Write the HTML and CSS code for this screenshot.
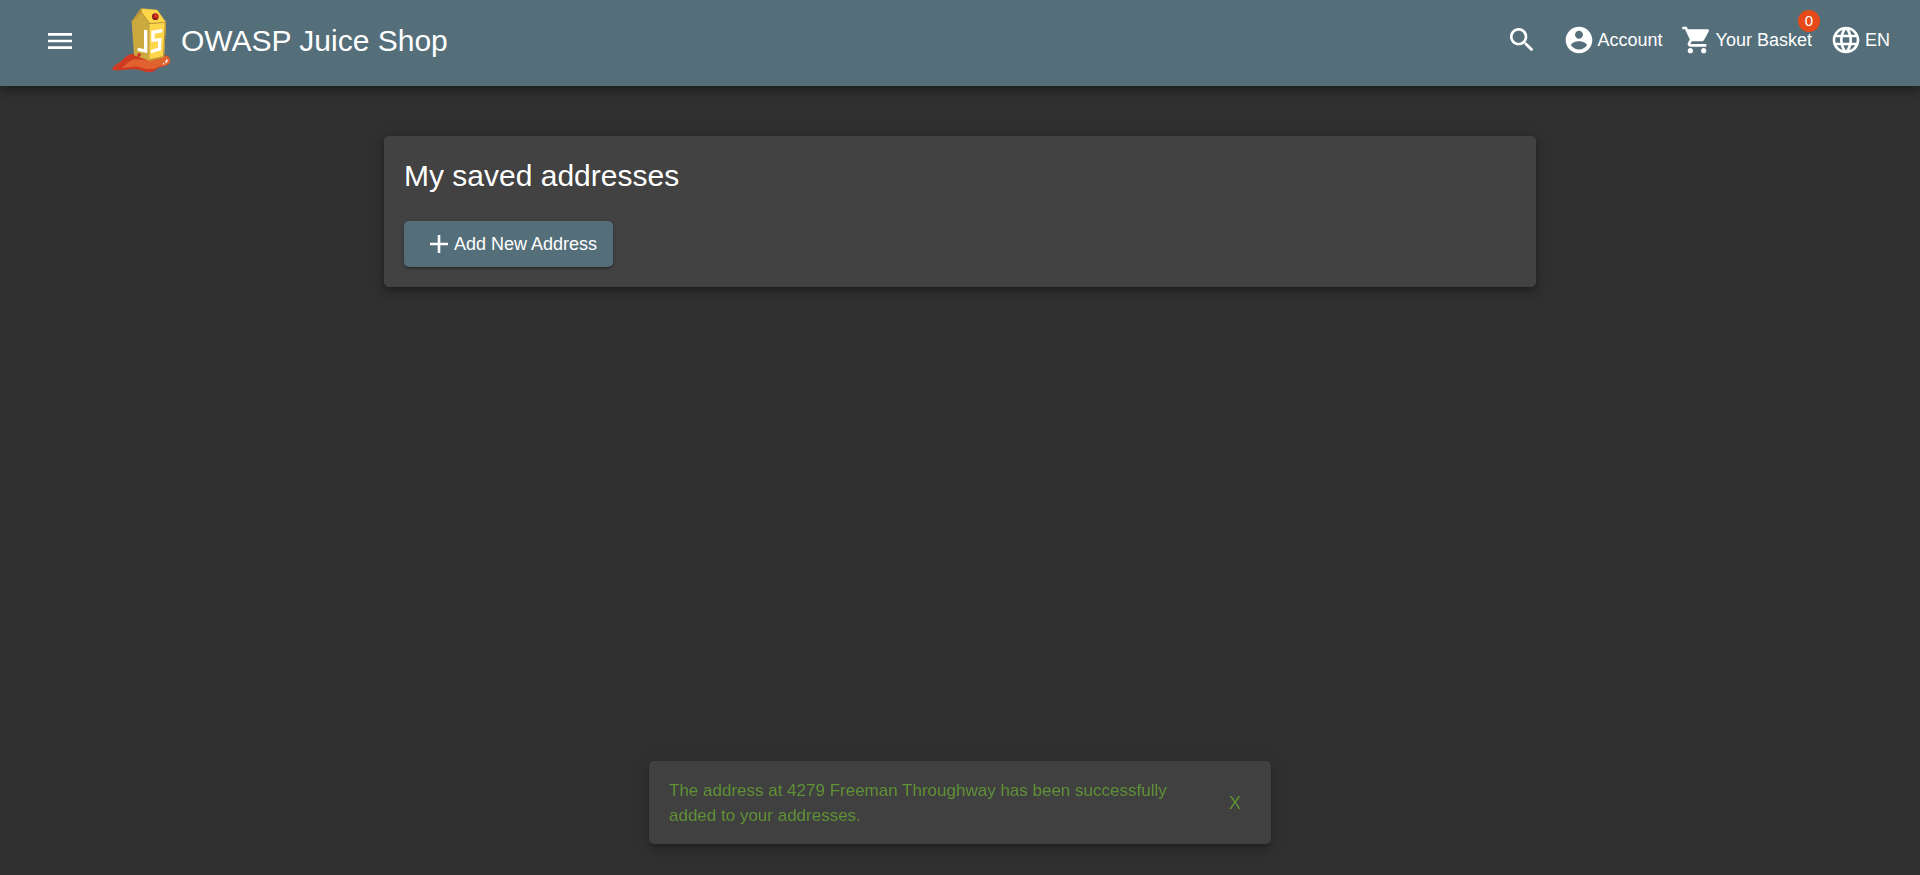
FILE: index.html
```html
<!DOCTYPE html>
<html lang="en">
<head>
<meta charset="utf-8">
<meta name="viewport" content="width=device-width, initial-scale=1">
<title>OWASP Juice Shop</title>
<link rel="stylesheet" href="styles.css">
</head>
<body>
<header class="toolbar">
  <button class="menu-button" type="button" aria-label="Open sidenav">
    <svg class="icon" viewBox="0 0 24 24"><path d="M3 18h18v-2H3v2zm0-5h18v-2H3v2zm0-7v2h18V6H3z"/></svg>
  </button>
  <a class="brand" href="#">
    <svg class="logo" viewBox="21 24 174 198" aria-hidden="true">
      <path fill="#cf3a22" d="M22 207C24 194 44 190 56 176C64 166 76 160 92 161L176 166C192 165 198 178 196 186C193 197 178 200 164 202C154 206 150 217 132 217C116 217 108 208 88 208C66 207 48 212 32 211C24 211 22 209 22 207Z"/>
      <path fill="#e0622f" d="M50 204C62 196 72 180 92 178C116 178 150 186 178 168C192 166 197 178 195 186C190 196 176 198 160 200C150 206 142 210 130 208C112 206 104 198 84 200C72 201 60 203 50 204Z"/>
      <path fill="#cf3a22" d="M122 209L138 206L150 210L132 215Z"/>
      <path fill="#cba93f" d="M108 25L80 64L87 166L133 182L133 71Z"/>
      <path fill="#fdd64a" d="M133 71L183 67L177 172L133 182Z"/>
      <path fill="#e0b843" d="M108 25L157 29L183 66L133 71Z"/>
      <path fill="#fdd64a" d="M110 27L156 31L180 65L135 69L112 40Z"/>
      <path fill="#b99434" d="M108 25L80 64L81 67L109 37L133 72L183 68L183 66L134 70L110 35Z"/>
      <path fill="#b99434" d="M179 70L183 68L177 172L133 182V178L174 169Z"/>
      <circle cx="151" cy="50" r="10" fill="#82201a"/><circle cx="153" cy="48" r="7" fill="#d5301f"/>
      <path fill="#fff" d="M117 89L127 91V159L98 153V143L117 147ZM139 92L172 87V97L149 101V116L170 114L168 151L138 160V150L159 143V124L139 126Z"/>
      <path fill="#cf3a22" d="M96 178L97 163Q102 155 108 162L107 169L102 170V180Z"/>
      <path fill="#fff" d="M182 180L188 178L187 187L181 190ZM174 189L178 188L177 193L174 194Z"/>
    </svg>
    <span class="brand-name">OWASP Juice Shop</span>
  </a>
  <nav class="actions">
    <button class="action search" type="button" aria-label="Search">
      <svg class="icon" viewBox="0 0 24 24"><path d="M15.5 14h-.79l-.28-.27C15.41 12.59 16 11.11 16 9.5 16 5.91 13.09 3 9.5 3S3 5.91 3 9.5 5.91 16 9.5 16c1.61 0 3.09-.59 4.23-1.57l.27.28v.79l5 4.99L20.49 19l-4.99-5zm-6 0C7.01 14 5 11.99 5 9.5S7.01 5 9.5 5 14 7.01 14 9.5 11.99 14 9.5 14z"/></svg>
    </button>
    <button class="action" type="button">
      <svg class="icon" viewBox="0 0 24 24"><path d="M12 2C6.48 2 2 6.48 2 12s4.48 10 10 10 10-4.48 10-10S17.52 2 12 2zm0 3c1.66 0 3 1.34 3 3s-1.34 3-3 3-3-1.34-3-3 1.34-3 3-3zm0 14.2c-2.5 0-4.71-1.28-6-3.22.03-1.99 4-3.08 6-3.08 1.99 0 5.97 1.09 6 3.08-1.29 1.94-3.5 3.22-6 3.22z"/></svg>
      <span>Account</span>
    </button>
    <button class="action" type="button">
      <svg class="icon" viewBox="0 0 24 24"><path d="M7 18c-1.1 0-1.99.9-1.99 2S5.9 22 7 22s2-.9 2-2-.9-2-2-2zM1 2v2h2l3.6 7.59-1.35 2.45c-.16.28-.25.61-.25.96 0 1.1.9 2 2 2h12v-2H7.42c-.14 0-.25-.11-.25-.25l.03-.12.9-1.63h7.45c.75 0 1.41-.41 1.75-1.03l3.58-6.49c.08-.14.12-.31.12-.48 0-.55-.45-1-1-1H5.21l-.94-2H1zm16 16c-1.1 0-1.99.9-1.99 2s.89 2 1.99 2 2-.9 2-2-.9-2-2-2z"/></svg>
      <span class="basket">Your Basket<span class="badge">0</span></span>
    </button>
    <button class="action" type="button">
      <svg class="icon" viewBox="0 0 24 24"><path d="M11.99 2C6.47 2 2 6.48 2 12s4.47 10 9.99 10C17.52 22 22 17.52 22 12S17.52 2 11.99 2zm6.93 6h-2.95c-.32-1.25-.78-2.45-1.38-3.56 1.84.63 3.37 1.91 4.33 3.56zM12 4.04c.83 1.2 1.48 2.53 1.91 3.96h-3.82c.43-1.43 1.08-2.76 1.91-3.96zM4.26 14C4.1 13.36 4 12.69 4 12s.1-1.36.26-2h3.38c-.08.66-.14 1.32-.14 2 0 .68.06 1.34.14 2H4.26zm.82 2h2.95c.32 1.25.78 2.45 1.38 3.56-1.84-.63-3.37-1.9-4.33-3.56zm2.95-8H5.08c.96-1.66 2.49-2.93 4.33-3.56C8.81 5.55 8.35 6.75 8.03 8zM12 19.96c-.83-1.2-1.48-2.53-1.91-3.96h3.82c-.43 1.43-1.08 2.76-1.91 3.96zM14.34 14H9.66c-.09-.66-.16-1.32-.16-2 0-.68.07-1.35.16-2h4.68c.09.65.16 1.32.16 2 0 .68-.07 1.34-.16 2zm.25 5.56c.6-1.11 1.06-2.31 1.38-3.56h2.95c-.96 1.65-2.49 2.93-4.33 3.56zM16.36 14c.08-.66.14-1.32.14-2 0-.68-.06-1.34-.14-2h3.38c.16.64.26 1.31.26 2s-.1 1.36-.26 2h-3.38z"/></svg>
      <span>EN</span>
    </button>
  </nav>
</header>
<main class="content">
  <section class="card">
    <h1 class="card-title">My saved addresses</h1>
    <button class="add-button" type="button">
      <svg class="plus" viewBox="0 0 26 26"><path d="M22 14.300h-7.700V22h-2.600v-7.700H4v-2.600h7.700V4h2.600v7.700H22z"/></svg>
      <span>Add New Address</span>
    </button>
  </section>
</main>
<div class="snackbar" role="status">
  <p class="snackbar-text">The address at 4279 Freeman Throughway has been successfully added to your addresses.</p>
  <button class="snackbar-close" type="button">X</button>
</div>
</body>
</html>
```
FILE: styles.css
```css
* { box-sizing: border-box; }
body {
  margin: 0;
  min-height: 100vh;
  background: #303030;
  color: #fff;
  font-family: "Liberation Sans", Arial, sans-serif;
  font-size: 18px;
}
button {
  border: 0;
  background: none;
  color: inherit;
  font: inherit;
  padding: 0;
  cursor: pointer;
}
svg { fill: currentColor; display: block; flex: none; }
.toolbar {
  display: flex;
  align-items: center;
  background: #546e7a;
  padding: 8px 30px 12px 44px;
  box-shadow: 0 3px 5px -1px rgba(0, 0, 0, .2), 0 6px 10px rgba(0, 0, 0, .14), 0 1px 18px rgba(0, 0, 0, .12);
}
.icon { width: 32px; height: 32px; }
.brand {
  display: flex;
  align-items: center;
  gap: 11px;
  margin-left: 36px;
  color: inherit;
  text-decoration: none;
}
.logo { width: 58px; height: 66px; }
.brand-name { font-size: 30px; line-height: 40px; }
.actions {
  display: flex;
  align-items: center;
  gap: 18px;
  margin-left: auto;
  padding-bottom: 2px;
}
.action { display: flex; align-items: center; gap: 3px; }
.search { margin-right: 7px; }
.basket { position: relative; }
.badge {
  position: absolute;
  top: -20px;
  right: -8px;
  width: 22px;
  border-radius: 50%;
  background: #e64a19;
  font-size: 15px;
  line-height: 22px;
  text-align: center;
}
.content { padding: 50px 20%; }
.card {
  background: #424242;
  border-radius: 5px;
  padding: 20px;
  box-shadow: 0 3px 5px -1px rgba(0, 0, 0, .2), 0 6px 10px rgba(0, 0, 0, .14), 0 1px 18px rgba(0, 0, 0, .12);
}
.card-title { margin: 0 0 25px; font-size: 30px; font-weight: 400; line-height: 40px; }
.add-button {
  display: flex;
  align-items: center;
  gap: 2px;
  height: 46px;
  padding: 0 16px 0 22px;
  border-radius: 5px;
  background: #546e7a;
  box-shadow: 0 3px 1px -2px rgba(0, 0, 0, .2), 0 2px 2px rgba(0, 0, 0, .14), 0 1px 5px rgba(0, 0, 0, .12);
}
.plus { width: 26px; height: 26px; }
.snackbar {
  position: fixed;
  bottom: 31px;
  left: 50%;
  transform: translateX(-50%);
  display: flex;
  align-items: center;
  justify-content: space-between;
  width: 622px;
  max-width: 90%;
  padding: 17px 20px 16px;
  border-radius: 5px;
  background: #404040;
  color: #5f9136;
  box-shadow: 0 3px 5px -1px rgba(0, 0, 0, .2), 0 6px 10px rgba(0, 0, 0, .14), 0 1px 18px rgba(0, 0, 0, .12);
}
.snackbar-text { margin: 0; max-width: 520px; font-size: 17px; line-height: 25px; }
.snackbar-close { padding: 10px; }
```
